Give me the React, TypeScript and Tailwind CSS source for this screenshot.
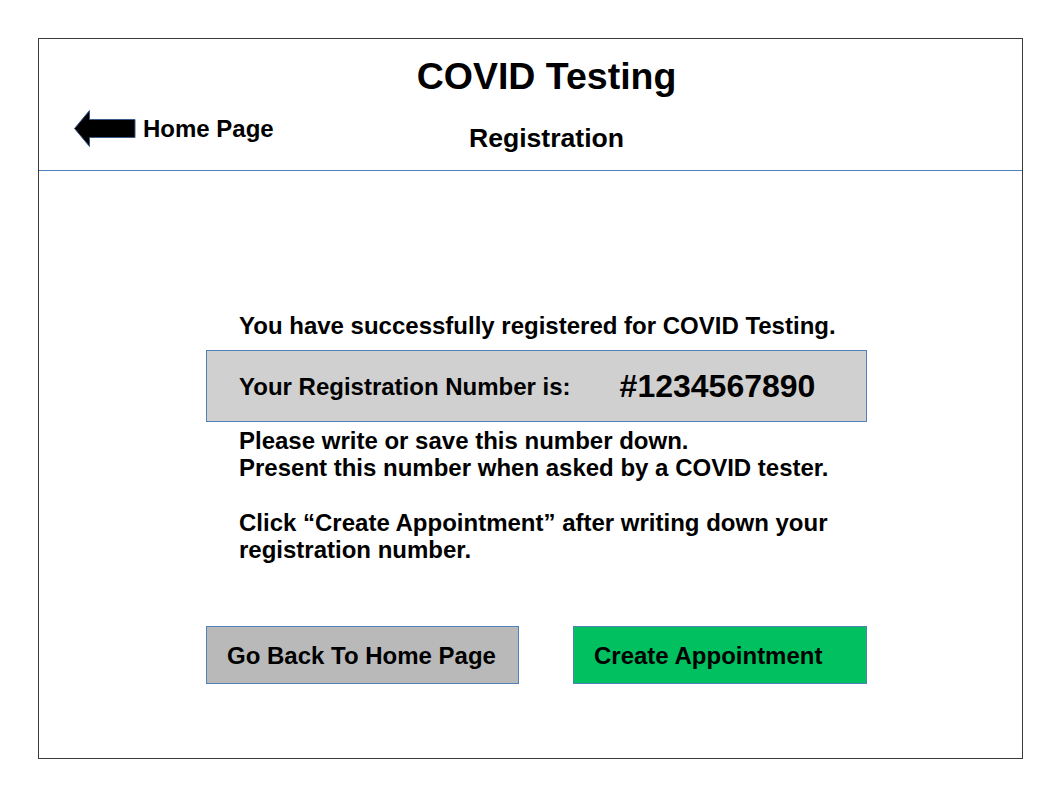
const font = { fontFamily: '"Liberation Sans", Arial, sans-serif' }

function BackArrow() {
  return (
    <svg width="62" height="38" viewBox="0 0 62 38" className="shrink-0">
      <path
        d="M0.5 18.5 L15.5 0.5 L15.5 9.5 L61 9.5 L61 27.5 L15.5 27.5 L15.5 36.5 Z"
        fill="#000"
        stroke="#3a5a8a"
        strokeWidth="1"
      />
    </svg>
  )
}

export default function App() {
  return (
    <div className="min-h-[794px] w-[1058px] bg-white text-black" style={font}>
      <div className="ml-[38px] mt-[38px] h-[721px] w-[985px] border border-[#3a3a3a]">
        <header className="h-[132px] border-b border-[#4f81bd] pl-[32px]">
          <h1 className="pt-[17px] text-center text-[37.5px] font-bold leading-[41px]">
            COVID Testing
          </h1>
          <div className="grid grid-cols-[1fr_auto_1fr] items-start">
            <div className="-ml-[32px] mt-[13px] flex items-center gap-[7px] pl-[35px]">
              <BackArrow />
              <span className="text-[24px] font-bold leading-[28px]">Home Page</span>
            </div>
            <h2 className="mt-[26px] text-[26.6px] font-bold leading-[30px]">Registration</h2>
            <div />
          </div>
        </header>

        <main className="ml-[167px] w-[661px] pt-[141px] text-[24px] font-bold leading-[27px]">
          <p className="pl-[33px]">You have successfully registered for COVID Testing.</p>

          <div className="mt-[11px] flex h-[72px] items-center border border-[#4f81bd] bg-[#d0d0d0] pl-[32px]">
            <span className="text-[24px]">Your Registration Number is:</span>
            <span className="ml-[49px] text-[32px]">#1234567890</span>
          </div>

          <div className="mt-[5px] pl-[33px]">
            <p>Please write or save this number down.</p>
            <p>Present this number when asked by a COVID tester.</p>
            <p className="mt-[28px]">
              Click “Create Appointment” after writing down your
              <br />
              registration number.
            </p>
          </div>

          <div className="mt-[63px] flex gap-[54px]">
            <button className="h-[58px] w-[313px] border border-[#4f81bd] bg-[#b9b9b9] pl-[20px] text-left font-bold">
              Go Back To Home Page
            </button>
            <button className="h-[58px] w-[294px] border border-[#4f81bd] bg-[#00c060] pl-[20px] text-left font-bold">
              Create Appointment
            </button>
          </div>
        </main>
      </div>
    </div>
  )
}
